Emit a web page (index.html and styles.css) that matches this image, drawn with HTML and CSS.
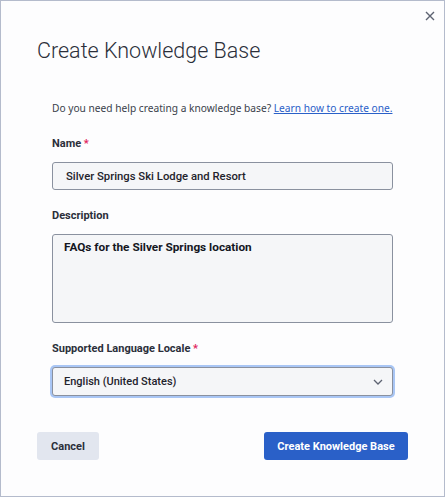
FILE: index.html
```html
<!DOCTYPE html>
<html>
<head>
<meta charset="utf-8">
<link rel="stylesheet" href="styles.css">
</head>
<body>
<div class="dialog">
  <button class="close" aria-label="Close">
    <svg width="10" height="10" viewBox="0 0 10 10"><path d="M1 1L9 9M9 1L1 9" stroke="#5d6372" stroke-width="1.4" fill="none"/></svg>
  </button>
  <h1 class="title">Create Knowledge Base</h1>
  <div class="body">
    <p class="help">Do you need help creating a knowledge base? <a href="#" class="link">Learn how to create one.</a></p>
    <div class="field">
      <label class="label">Name <span class="req">*</span></label>
      <div class="input">Silver Springs Ski Lodge and Resort</div>
    </div>
    <div class="field">
      <label class="label">Description</label>
      <div class="textarea">FAQs for the Silver Springs location</div>
    </div>
    <div class="field">
      <label class="label">Supported Language Locale <span class="req">*</span></label>
      <div class="select">
        <span>English (United States)</span>
        <svg width="10" height="6" viewBox="0 0 10 6"><path d="M1 1L5 5L9 1" stroke="#5d6372" stroke-width="1.3" fill="none"/></svg>
      </div>
    </div>
  </div>
  <div class="footer">
    <button class="btn btn-secondary">Cancel</button>
    <button class="btn btn-primary">Create Knowledge Base</button>
  </div>
</div>
</body>
</html>
```
FILE: styles.css
```css
* { box-sizing: border-box; }
html, body { margin: 0; padding: 0; background: #fdfdfe; }
.dialog {
  position: relative;
  width: 445px;
  height: 497px;
  border: 1px solid #b4bbcc;
  background: #fdfdfe;
  padding: 0 36px;
  font-family: Roboto, "Noto Sans", sans-serif;
  color: #2b2f3a;
}
.close {
  position: absolute;
  top: 8px;
  right: 7px;
  width: 14px;
  height: 14px;
  padding: 2px;
  border: 0;
  background: none;
  display: flex;
  align-items: center;
  justify-content: center;
}
.title {
  margin: 0;
  padding-top: 36px;
  font-size: 21.5px;
  line-height: 28px;
  font-weight: 300;
  color: #2b2f3a;
}
.body {
  padding: 35px 15px 0;
  display: flex;
  flex-direction: column;
}
.help {
  margin: 0 0 20px;
  font-family: "Noto Sans", sans-serif;
  font-size: 10.2px;
  line-height: 16px;
  color: #3a3f4b;
  white-space: nowrap;
}
.link { color: #2a60c8; text-decoration: underline; }
.field {
  display: flex;
  flex-direction: column;
  margin-bottom: 18px;
}
.label {
  font-size: 11px;
  line-height: 16px;
  font-weight: 700;
  color: #2b2f3a;
  margin-bottom: 10px;
}
.req { color: #e0245e; }
.input, .textarea, .select {
  border: 1px solid #8a919f;
  border-radius: 3px;
  background: #f5f6f8;
  font-weight: 500;
  color: #1f232c;
}
.input {
  height: 28px;
  padding: 0 13px;
  display: flex;
  align-items: center;
  font-size: 11.3px;
}
.textarea {
  height: 89px;
  padding: 4px 11px;
  font-size: 11.8px;
  line-height: 16px;
  font-weight: 700;
  color: #14171f;
}
.select {
  height: 29px;
  padding: 0 9px 0 11px;
  display: flex;
  align-items: center;
  justify-content: space-between;
  font-size: 11px;
  box-shadow: 0 0 0 2px #a9c6f5;
}
.footer {
  display: flex;
  justify-content: space-between;
  margin-top: 18px;
}
.btn {
  height: 28px;
  border: 0;
  border-radius: 3px;
  font-family: Roboto, sans-serif;
  font-size: 11px;
  font-weight: 700;
  padding: 0;
  white-space: nowrap;
}
.btn-secondary { background: #e2e6ef; color: #2b2f3a; width: 62px; }
.btn-primary { background: #2a60c8; color: #ffffff; width: 144px; }
```
